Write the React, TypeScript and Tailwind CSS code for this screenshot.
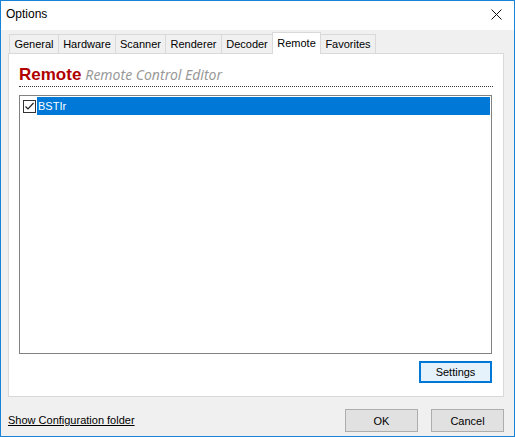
export default function App() {
  const tabs = [
    { name: "General", w: "w-[50px]" },
    { name: "Hardware", w: "w-[58px]" },
    { name: "Scanner", w: "w-[51px]" },
    { name: "Renderer", w: "w-[57px]" },
    { name: "Decoder", w: "w-[52px]" },
    { name: "Remote", w: "w-[49px]", active: true },
    { name: "Favorites", w: "w-[56px]" },
  ];

  return (
    <div
      className="w-[515px] h-[437px] bg-[#f0f0f0] border border-[#1883d7] flex flex-col text-[11px] text-black overflow-hidden"
      style={{ fontFamily: '"Liberation Sans", Arial, sans-serif' }}
    >
      {/* title bar */}
      <div className="h-[29px] bg-white flex items-center justify-between shrink-0 pb-[3px]">
        <span className="pl-[5px] text-[12px]">Options</span>
        <svg className="mr-[12px]" width="11" height="11" viewBox="0 0 11 11">
          <path d="M0.5 0.5L10.5 10.5M10.5 0.5L0.5 10.5" stroke="#111" strokeWidth="1" />
        </svg>
      </div>

      {/* tabs */}
      <div className="flex items-end h-[22px] pl-[8px] mt-[1px] shrink-0">
        {tabs.map((t) =>
          t.active ? (
            <div
              key={t.name}
              className={`${t.w} h-[22px] -mb-px relative z-10 bg-white border border-b-0 border-[#d9d9d9] -ml-px flex items-start justify-center pt-[2px] leading-[16px]`}
            >
              {t.name}
            </div>
          ) : (
            <div
              key={t.name}
              className={`${t.w} h-[19px] bg-[#f0f0f0] border border-b-0 border-[#d9d9d9] -ml-px first:ml-0 flex items-center justify-center leading-[16px]`}
            >
              {t.name}
            </div>
          )
        )}
      </div>

      {/* panel */}
      <div className="ml-[7px] mr-[10px] h-[344px] bg-white border border-[#d9d9d9] flex flex-col px-[10px] shrink-0">
        <div className="flex items-baseline gap-[4px] mt-[11px] h-[22px] border-b border-dotted border-[#333]">
          <span className="text-[17px] font-bold text-[#b00000] leading-[19px]">Remote</span>
          <span
            className="text-[14px] italic text-[#999] leading-[19px]"
            style={{ fontFamily: '"Noto Sans", sans-serif' }}
          >
            Remote Control Editor
          </span>
        </div>
        <div className="mt-[8px] mr-[1px] h-[259px] border border-[#828282] bg-white p-[1px]">
          <div className="flex items-center h-[18px]">
            <div className="ml-[2px] w-[13px] h-[13px] border border-[#333] bg-white flex items-center justify-center">
              <svg width="11" height="11" viewBox="0 0 11 11">
                <path d="M1.5 5.5L4 8L9.5 2" stroke="#222" strokeWidth="1.2" fill="none" />
              </svg>
            </div>
            <div className="ml-[1px] flex-1 h-[18px] bg-[#0078d7] text-white flex items-center pl-[1px] leading-[16px]">
              BSTIr
            </div>
          </div>
        </div>
        <div className="flex justify-end mt-[7px] mr-[1px]">
          <button className="w-[73px] h-[22px] bg-[#e5f1fb] border-2 border-[#0078d7] flex items-center justify-center leading-[16px]">
            Settings
          </button>
        </div>
      </div>

      {/* footer */}
      <div className="flex items-center pl-[7px] pr-[10px] mt-[12px]">
        <span className="underline">Show Configuration folder</span>
        <div className="ml-auto flex gap-[13px]">
          <button className="w-[73px] h-[23px] bg-[#e1e1e1] border border-[#adadad] leading-[16px]">OK</button>
          <button className="w-[73px] h-[23px] bg-[#e1e1e1] border border-[#adadad] leading-[16px]">Cancel</button>
        </div>
      </div>
    </div>
  );
}
